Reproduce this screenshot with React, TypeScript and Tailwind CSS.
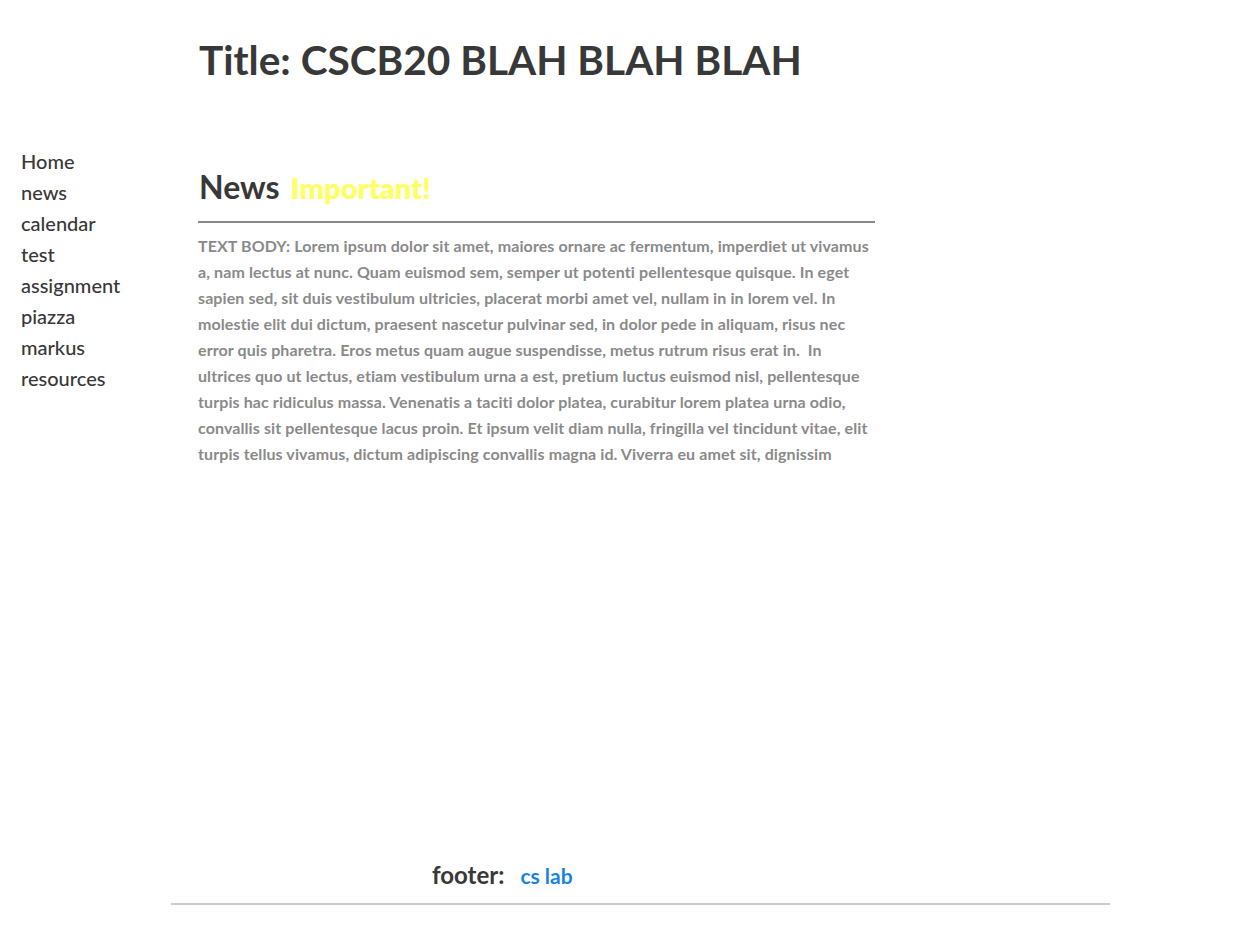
const navItems = ["Home", "news", "calendar", "test", "assignment", "piazza", "markus", "resources"];

// lines broken where the original page wraps them
const bodyLines = [
  "TEXT BODY: Lorem ipsum dolor sit amet, maiores ornare ac fermentum, imperdiet ut vivamus",
  "a, nam lectus at nunc. Quam euismod sem, semper ut potenti pellentesque quisque. In eget",
  "sapien sed, sit duis vestibulum ultricies, placerat morbi amet vel, nullam in in lorem vel. In",
  "molestie elit dui dictum, praesent nascetur pulvinar sed, in dolor pede in aliquam, risus nec",
  "error quis pharetra. Eros metus quam augue suspendisse, metus rutrum risus erat in.  In",
  "ultrices quo ut lectus, etiam vestibulum urna a est, pretium luctus euismod nisl, pellentesque",
  "turpis hac ridiculus massa. Venenatis a taciti dolor platea, curabitur lorem platea urna odio,",
  "convallis sit pellentesque lacus proin. Et ipsum velit diam nulla, fringilla vel tincidunt vitae, elit",
  "turpis tellus vivamus, dictum adipiscing convallis magna id. Viverra eu amet sit, dignissim",
];

export default function App() {
  return (
    <div className="flex min-h-[925px] flex-col bg-white font-['Lato',sans-serif] text-[#383838]">
      <header className="pl-[199px] pt-[34px]">
        <h1 className="text-[40.6px] font-bold leading-[52px]">Title: CSCB20 BLAH BLAH BLAH</h1>
      </header>

      <div className="mt-[60px] flex">
        <nav className="w-[198px] shrink-0 pl-[21px]">
          <ul className="flex flex-col">
            {navItems.map((item) => (
              <li key={item} className="text-[20px] font-medium leading-[31px]">
                {item}
              </li>
            ))}
          </ul>
        </nav>

        <main className="w-[690px] pt-[21px]">
          <div className="flex items-baseline gap-[11px] pl-[1px]">
            <h2 className="text-[32px] font-bold leading-[40px]">News</h2>
            <span className="text-[29px] font-extrabold leading-[40px] text-[#ffff66]">Important!</span>
          </div>
          <hr className="mt-[13px] w-[677px] border-t-2 border-[#888888]" />
          <p className="mt-[10px] text-[16px] font-bold leading-[26px] tracking-[0.1px] text-[#8a8a8a]">
            {bodyLines.map((line, i) => (
              <span key={i} className="block whitespace-pre">
                {line}
              </span>
            ))}
          </p>
        </main>
      </div>

      <div className="flex-1" />

      <footer className="mx-[171px] mb-[20px] w-[939px] border-b-2 border-[#cccccc] pb-[12px]">
        <div className="flex items-baseline gap-[16px] pl-[261px]">
          <span className="text-[24px] font-bold leading-[30px]">footer:</span>
          <a className="text-[21px] font-bold leading-[30px] text-[#1a82e2]">cs lab</a>
        </div>
      </footer>
    </div>
  );
}
